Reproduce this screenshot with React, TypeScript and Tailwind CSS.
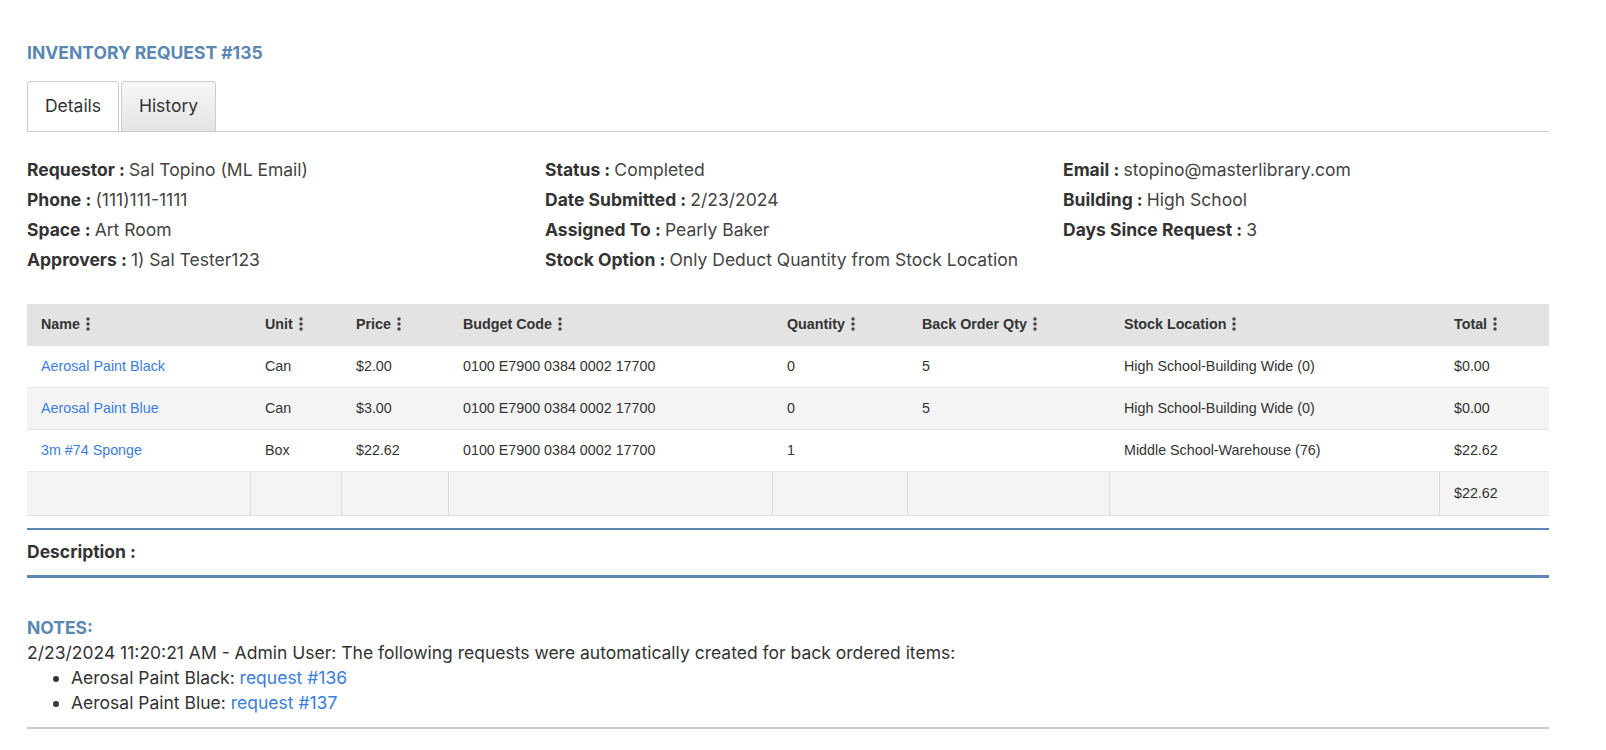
import React from "react";

const Kebab = () => (
  <svg width="4" height="14" viewBox="0 0 4 14" className="inline-block ml-[6px] align-[-2px]">
    <circle cx="2" cy="2" r="1.7" fill="#444" />
    <circle cx="2" cy="7" r="1.7" fill="#444" />
    <circle cx="2" cy="12" r="1.7" fill="#444" />
  </svg>
);

const cols = [
  { name: "Name", w: "w-[224px]" },
  { name: "Unit", w: "w-[91px]" },
  { name: "Price", w: "w-[107px]" },
  { name: "Budget Code", w: "w-[324px]" },
  { name: "Quantity", w: "w-[135px]" },
  { name: "Back Order Qty", w: "w-[202px]" },
  { name: "Stock Location", w: "w-[330px]" },
  { name: "Total", w: "w-[109px]" },
];

const rows = [
  ["Aerosal Paint Black", "Can", "$2.00", "0100 E7900 0384 0002 17700", "0", "5", "High School-Building Wide (0)", "$0.00"],
  ["Aerosal Paint Blue", "Can", "$3.00", "0100 E7900 0384 0002 17700", "0", "5", "High School-Building Wide (0)", "$0.00"],
  ["3m #74 Sponge", "Box", "$22.62", "0100 E7900 0384 0002 17700", "1", "", "Middle School-Warehouse (76)", "$22.62"],
];

const Field = ({ label, value }: { label: string; value: string }) => (
  <div className="h-[30px] leading-[30px] whitespace-nowrap">
    <span className="font-bold text-[#333]">{label} : </span>
    <span className="text-[#444]">{value}</span>
  </div>
);

export default function App() {
  return (
    <div
      className="bg-white w-full h-[750px] overflow-hidden px-[27px] pt-[40px] text-[17.5px] text-[#333]"
      style={{ fontFamily: "Inter, 'Noto Sans', sans-serif" }}
    >
      <div className="font-bold text-[17.5px] text-[#5b87b3] leading-[26px]">INVENTORY REQUEST #135</div>

      <div className="mt-[15px] flex items-end gap-[2px] border-b border-[#cccccc] w-[1522px]">
        <div className="w-[92px] h-[50px] flex items-center justify-center bg-white border border-b-0 border-[#cccccc] rounded-t-[4px] text-[#333]">
          Details
        </div>
        <div className="w-[95px] h-[50px] flex items-center justify-center bg-gradient-to-b from-[#f7f7f7] to-[#e4e4e4] border border-b-0 border-[#cccccc] rounded-t-[4px] text-[#333]">
          History
        </div>
      </div>

      <div className="mt-[23px] grid grid-cols-[518px_518px_486px] w-[1522px]">
        <div>
          <Field label="Requestor" value="Sal Topino (ML Email)" />
          <Field label="Phone" value="(111)111-1111" />
          <Field label="Space" value="Art Room" />
          <Field label="Approvers" value="1) Sal Tester123" />
        </div>
        <div>
          <Field label="Status" value="Completed" />
          <Field label="Date Submitted" value="2/23/2024" />
          <Field label="Assigned To" value="Pearly Baker" />
          <Field label="Stock Option" value="Only Deduct Quantity from Stock Location" />
        </div>
        <div>
          <Field label="Email" value="stopino@masterlibrary.com" />
          <Field label="Building" value="High School" />
          <Field label="Days Since Request" value="3" />
        </div>
      </div>

      <div className="mt-[29px] w-[1522px] text-[14.3px] text-[#333]" style={{ fontFamily: "'Liberation Sans', Arial, sans-serif" }}>
        <div className="flex h-[42px] bg-[#e3e3e3] items-center font-bold">
          {cols.map((c) => (
            <div key={c.name} className={`${c.w} shrink-0 pl-[14px] whitespace-nowrap`}>
              {c.name}
              <Kebab />
            </div>
          ))}
        </div>
        {rows.map((r, i) => (
          <div key={i} className={`flex h-[42px] items-center border-b border-[#e6e6e6] ${i % 2 === 1 ? "bg-[#f4f4f4]" : "bg-white"}`}>
            {r.map((v, j) => (
              <div key={j} className={`${cols[j].w} shrink-0 pl-[14px] whitespace-nowrap ${j === 0 ? "text-[#3b7ddd]" : ""}`}>
                {v}
              </div>
            ))}
          </div>
        ))}
        <div className="flex h-[44px] bg-[#f4f4f4] border-b border-[#dddddd]">
          {cols.map((c, j) => (
            <div key={j} className={`${c.w} shrink-0 pl-[14px] flex items-center ${j < 7 ? "border-r border-[#dddddd]" : ""}`}>
              {j === 7 ? "$22.62" : ""}
            </div>
          ))}
        </div>
      </div>

      <div className="mt-[12px] w-[1522px] border-t-2 border-b-[3px] border-[#5b87b3] h-[50px] flex items-center font-bold text-[#333]">
        Description :
      </div>

      <div className="mt-[38px] font-bold text-[17.5px] text-[#5b87b3] leading-[24px]">NOTES:</div>
      <div className="text-[#333] leading-[25px]">
        2/23/2024 11:20:21 AM - Admin User: The following requests were automatically created for back ordered items:
      </div>
      <ul className="list-disc pl-[44px] leading-[25px] text-[#333]">
        <li>
          Aerosal Paint Black: <span className="text-[#3b7ddd]">request #136</span>
        </li>
        <li>
          Aerosal Paint Blue: <span className="text-[#3b7ddd]">request #137</span>
        </li>
      </ul>
      <div className="mt-[12px] w-[1522px] h-[2px] bg-[#cccccc]" />
    </div>
  );
}
